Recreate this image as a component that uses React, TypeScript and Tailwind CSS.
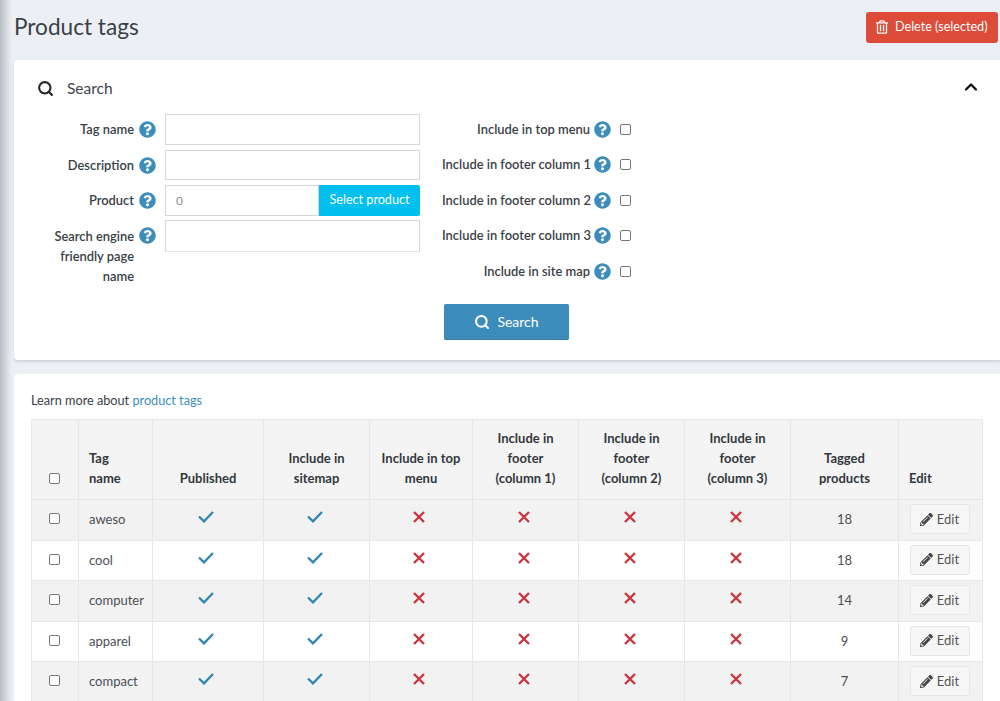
import { FaPencilAlt, FaQuestionCircle, FaRegTrashAlt } from "react-icons/fa";
import { LuChevronUp, LuSearch } from "react-icons/lu";

const leftFields = [
  { label: "Tag name", rowClass: "h-[31px] mb-[5px]" },
  { label: "Description", rowClass: "h-[30px] mb-[5px]" },
];

const rightFields = [
  "Include in top menu",
  "Include in footer column 1",
  "Include in footer column 2",
  "Include in footer column 3",
  "Include in site map",
];

const tags = [
  { name: "aweso", count: 18 },
  { name: "cool", count: 18 },
  { name: "computer", count: 14 },
  { name: "apparel", count: 9 },
  { name: "compact", count: 7 },
];

const thClass = "border border-[#e6e7e8] px-[10px] pb-[11px] align-bottom text-center text-[13px] leading-[20px] font-bold text-[#33383d]";
const tdClass = "border border-[#e6e7e8] text-center align-middle";
const labelClass = "text-right font-semibold text-[12.9px] text-[#3a4047]";

const Help = () => <FaQuestionCircle className="w-[17px] h-[17px] shrink-0 text-[#3c8dbc]" />;

const Box = () => (
  <input type="checkbox" className="appearance-none block w-[11px] h-[11px] border border-[#777] rounded-[2px] bg-white" />
);

const TextInput = ({ className }: { className: string }) => (
  <div className={`w-[255px] bg-white border border-[#d5d7d9] ${className}`} />
);

const Yes = () => (
  <span className="flex justify-center pr-[4px] pb-[5px]">
    <svg viewBox="0 0 16 12" className="w-[16px] h-[12px] text-[#2f86b5]" fill="none" stroke="currentColor" strokeWidth="2.3">
      <path d="M1 5.5 L6 10.4 L15 1" />
    </svg>
  </span>
);

const No = () => (
  <span className="flex justify-center pr-[4px] pb-[5px]">
    <svg viewBox="0 0 12 12" className="w-[12px] h-[12px] text-[#c9363f]" fill="none" stroke="currentColor" strokeWidth="2.4">
      <path d="M1 1 L11 11 M11 1 L1 11" />
    </svg>
  </span>
);

export default function App() {
  return (
    <div className="w-[1000px] h-[701px] overflow-hidden bg-[#ecf0f5] pl-[14px] text-[13px] text-[#33383d] font-['Lato','Noto_Sans',sans-serif] bg-[linear-gradient(90deg,#b9bdc4_0px,#d5d8dd_6px,#ecf0f5_12px)]">
      <div className="flex items-center justify-between h-[60px] pb-[6px] pr-[2px]">
        <h1 className="text-[22.6px] font-normal text-[#3a4047]">Product tags</h1>
        <button className="flex items-center gap-[7px] w-[132px] h-[31px] pl-[10px] rounded-[3px] bg-[#dd4b39] text-white text-[12.6px]">
          <FaRegTrashAlt className="w-[12px] h-[14px]" />
          Delete (selected)
        </button>
      </div>

      <section className="h-[301px] bg-white rounded-l-[4px] border-b border-[#d5d8dc] shadow-sm">
        <div className="flex items-center justify-between h-[54px] pt-[3px] pl-[23px] pr-[19px]">
          <div className="flex items-center gap-[13px] text-[15.5px] text-[#3f454b]">
            <LuSearch className="w-[17px] h-[17px] text-[#22272b] stroke-[3]" />
            Search
          </div>
          <LuChevronUp className="w-[20px] h-[20px] mb-[4px] text-[#111] stroke-[2.8]" />
        </div>

        <div className="flex">
          <div className="w-[406px]">
            {leftFields.map((f) => (
              <div key={f.label} className={`flex items-center ${f.rowClass}`}>
                <span className={`w-[120px] pt-[1px] ${labelClass}`}>{f.label}</span>
                <span className="ml-[5px] mr-[9px] flex"><Help /></span>
                <TextInput className="h-full" />
              </div>
            ))}
            <div className="flex items-center h-[31px] mb-[4px]">
              <span className={`w-[120px] pt-[1px] ${labelClass}`}>Product</span>
              <span className="ml-[5px] mr-[9px] flex"><Help /></span>
              <div className="flex w-[255px] h-full">
                <div className="flex-1 border border-[#d5d7d9] pl-[10px] flex items-center text-[#8a8f94] text-[12px]">0</div>
                <button className="w-[101px] bg-[#00c0ef] text-white text-[12.6px] rounded-r-[2px]">Select product</button>
              </div>
            </div>
            <div className="flex items-start">
              <span className={`w-[120px] pl-[34px] leading-[20px] pt-[6px] ${labelClass}`}>
                Search engine friendly page name
              </span>
              <span className="ml-[5px] mr-[9px] pt-[7px] flex"><Help /></span>
              <TextInput className="h-[32px] border-b-[#e6e7e8]" />
            </div>
          </div>

          <div className="w-[217px] pl-[22px]">
            {rightFields.map((label) => (
              <div key={label} className="flex items-center h-[30px] mb-[5.5px] whitespace-nowrap">
                <span className={`w-[148px] pt-[1px] ${labelClass}`}>{label}</span>
                <span className="ml-[4px] mr-[9px] flex"><Help /></span>
                <Box />
              </div>
            ))}
          </div>
        </div>

        <div className="flex justify-center mt-[12.5px]">
          <button className="flex items-center justify-center gap-[7px] w-[125px] h-[36px] ml-[-1px] bg-[#3c8dbc] text-white text-[14px] rounded-[2px] border-b border-[#367fa9]">
            <LuSearch className="w-[16px] h-[16px] stroke-[3]" />
            Search
          </button>
        </div>
      </section>

      <section className="mt-[13px] h-[400px] bg-white rounded-l-[4px] pl-[17px] pt-[18px]">
        <p className="h-[27px] text-[12.7px] leading-[16px] text-[#3a4047]">
          Learn more about <a className="text-[#3c8dbc]">product tags</a>
        </p>
        <table className="table-fixed border-collapse w-[951px]">
          <colgroup>
            <col className="w-[47px]" />
            <col className="w-[74px]" />
            <col className="w-[111px]" />
            <col className="w-[106px]" />
            <col className="w-[103px]" />
            <col className="w-[106px]" />
            <col className="w-[106px]" />
            <col className="w-[106px]" />
            <col className="w-[108px]" />
            <col className="w-[84px]" />
          </colgroup>
          <thead>
            <tr className="h-[80px] bg-[#f4f4f4]">
              <th className={thClass}><span className="flex justify-center pr-[2px] pb-[4px]"><Box /></span></th>
              <th className={`${thClass} text-left pr-[24px]`}>Tag name</th>
              <th className={thClass}>Published</th>
              <th className={thClass}>Include in sitemap</th>
              <th className={thClass}>Include in top menu</th>
              {[1, 2, 3].map((n) => (
                <th key={n} className={thClass}>Include in footer <span className="whitespace-nowrap">(column {n})</span></th>
              ))}
              <th className={thClass}>Tagged products</th>
              <th className={`${thClass} text-left`}>Edit</th>
            </tr>
          </thead>
          <tbody>
            {tags.map((t) => (
              <tr key={t.name} className="h-[40.5px] odd:bg-[#f2f2f2] even:bg-white text-[#4a4f54]">
                <td className={tdClass}><span className="flex justify-center pr-[2px] pb-[2px]"><Box /></span></td>
                <td className={`${tdClass} text-left pl-[10px]`}>{t.name}</td>
                <td className={tdClass}><Yes /></td>
                <td className={tdClass}><Yes /></td>
                {[0, 1, 2, 3].map((i) => (
                  <td key={i} className={tdClass}><No /></td>
                ))}
                <td className={tdClass}>{t.count}</td>
                <td className={tdClass}>
                  <button className="inline-flex items-center justify-center gap-[4px] w-[60px] h-[30px] mr-[2px] mb-[1px] bg-[#f6f6f6] border border-[#e6e6e6] rounded-[2px] text-[#555]">
                    <FaPencilAlt className="w-[13px] h-[13px] text-[#444]" />
                    Edit
                  </button>
                </td>
              </tr>
            ))}
          </tbody>
        </table>
      </section>
    </div>
  );
}
